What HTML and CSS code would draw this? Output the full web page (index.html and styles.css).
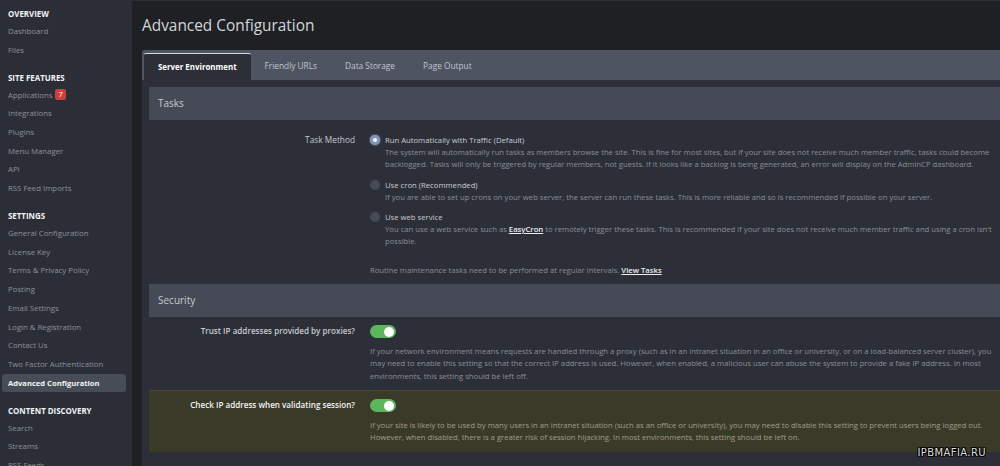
FILE: index.html
```html
<!DOCTYPE html>
<html>
<head>
<meta charset="utf-8">
<link rel="stylesheet" href="styles.css">
</head>
<body>
<div class="layout">
  <nav class="sidebar">
    <div class="group">
      <div class="group-title">Overview</div>
      <div class="item">Dashboard</div>
      <div class="item">Files</div>
    </div>
    <div class="group">
      <div class="group-title">Site Features</div>
      <div class="item">Applications <span class="badge">7</span></div>
      <div class="item">Integrations</div>
      <div class="item">Plugins</div>
      <div class="item">Menu Manager</div>
      <div class="item">API</div>
      <div class="item">RSS Feed Imports</div>
    </div>
    <div class="group">
      <div class="group-title">Settings</div>
      <div class="item">General Configuration</div>
      <div class="item">License Key</div>
      <div class="item">Terms &amp; Privacy Policy</div>
      <div class="item">Posting</div>
      <div class="item">Email Settings</div>
      <div class="item">Login &amp; Registration</div>
      <div class="item">Contact Us</div>
      <div class="item">Two Factor Authentication</div>
      <div class="item active">Advanced Configuration</div>
    </div>
    <div class="group">
      <div class="group-title">Content Discovery</div>
      <div class="item">Search</div>
      <div class="item">Streams</div>
      <div class="item">RSS Feeds</div>
    </div>
  </nav>
  <main class="main">
    <h1 class="page-title">Advanced Configuration</h1>
    <div class="tabs-box">
      <div class="tabs">
        <div class="tab active">Server Environment</div>
        <div class="tab">Friendly URLs</div>
        <div class="tab">Data Storage</div>
        <div class="tab">Page Output</div>
      </div>
      <div class="panel">
        <div class="section-head">Tasks</div>
        <div class="row">
          <div class="label">Task Method</div>
          <div class="field">
            <div class="option">
              <span class="radio checked"></span>
              <div class="opt-body">
                <div class="opt-title">Run Automatically with Traffic (Default)</div>
                <div class="desc">The system will automatically run tasks as members browse the site. This is fine for most sites, but if your site does not receive much member traffic, tasks could become backlogged. Tasks will only be triggered by regular members, not guests. If it looks like a backlog is being generated, an error will display on the AdminCP dashboard.</div>
              </div>
            </div>
            <div class="option">
              <span class="radio"></span>
              <div class="opt-body">
                <div class="opt-title">Use cron (Recommended)</div>
                <div class="desc">If you are able to set up crons on your web server, the server can run these tasks. This is more reliable and so is recommended if possible on your server.</div>
              </div>
            </div>
            <div class="option">
              <span class="radio"></span>
              <div class="opt-body">
                <div class="opt-title">Use web service</div>
                <div class="desc">You can use a web service such as <a class="link">EasyCron</a> to remotely trigger these tasks. This is recommended if your site does not receive much member traffic and using a cron isn't possible.</div>
              </div>
            </div>
            <div class="desc note">Routine maintenance tasks need to be performed at regular intervals. <a class="link">View Tasks</a></div>
          </div>
        </div>
        <div class="section-head">Security</div>
        <div class="row row-sec">
          <div class="label strong">Trust IP addresses provided by proxies?</div>
          <div class="field">
            <span class="toggle"></span>
            <div class="desc">If your network environment means requests are handled through a proxy (such as in an intranet situation in an office or university, or on a load-balanced server cluster), you may need to enable this setting so that the correct IP address is used. However, when enabled, a malicious user can abuse the system to provide a fake IP address. In most environments, this setting should be left off.</div>
          </div>
        </div>
        <div class="row row-sec highlight">
          <div class="label strong white">Check IP address when validating session?</div>
          <div class="field">
            <span class="toggle"></span>
            <div class="desc">If your site is likely to be used by many users in an intranet situation (such as an office or university), you may need to disable this setting to prevent users being logged out. However, when disabled, there is a greater risk of session hijacking. In most environments, this setting should be left on.</div>
          </div>
        </div>
      </div>
    </div>
  </main>
</div>
<div class="watermark">IPBMAFIA.RU</div>
</body>
</html>
```

FILE: styles.css
```css
* { box-sizing: border-box; }
html, body { margin: 0; padding: 0; }
body {
  background: #1f2024;
  font-family: "Open Sans", "Liberation Sans", sans-serif;
  width: 1000px;
  height: 466px;
  overflow: hidden;
  position: relative;
}
.layout {
  display: flex;
  height: 466px;
  border-top: 1px solid #2c2e34;
}
.sidebar {
  width: 132px;
  flex: none;
  background: #2b2e37;
  padding-top: 5px;
}
.group { margin-bottom: 10.3px; }
.group-title {
  color: #f2f3f5;
  font-size: 7.9px;
  font-weight: 700;
  text-transform: uppercase;
  line-height: 16px;
  padding-left: 8px;
}
.item {
  color: #8d919a;
  font-size: 7.8px;
  line-height: 18.7px;
  height: 18.7px;
  padding-left: 6px;
  margin: 0 6px 0 2px;
  white-space: nowrap;
}
.item.active {
  background: #484c57;
  color: #f4f5f7;
  font-weight: 700;
  font-size: 7.6px;
  border-radius: 3px;
}
.badge {
  display: inline-block;
  background: #c8413a;
  color: #fff;
  font-size: 7.5px;
  line-height: 11px;
  height: 11px;
  padding: 0 3px;
  border-radius: 2px;
  vertical-align: 1px;
  margin-left: 1px;
}
.main {
  flex: 1;
  padding-left: 10px;
  min-width: 0;
}
.page-title {
  margin: 0;
  height: 49px;
  padding-top: 13px;
  font-size: 15.4px;
  font-weight: 400;
  color: #d3d6db;
  line-height: 24px;
}
.tabs-box {
  background: #2c2f38;
  border-radius: 3px 0 0 0;
  overflow: hidden;
}
.tabs {
  display: flex;
  background: #4e5462;
  height: 30px;
  padding: 3px 0 0 2px;
}
.tab {
  padding: 0 14px;
  font-size: 8.3px;
  color: #c3c7ce;
  line-height: 26px;
}
.tab.active {
  background: #2c2f38;
  color: #fff;
  font-weight: 700;
  font-size: 7.9px;
  border-top: 1px solid #d9dbe0;
  border-radius: 2px 2px 0 0;
}
.panel {
  padding: 7px 0 0 7px;
  height: 400px;
}
.section-head {
  background: #454a56;
  color: #c6c9cf;
  font-size: 10px;
  height: 33px;
  line-height: 33px;
  padding-left: 9px;
}
.row {
  display: flex;
  padding: 14px 3px 0 0;
  height: 164px;
}
.label {
  width: 206px;
  flex: none;
  text-align: right;
  font-size: 8.3px;
  color: #c6c9cf;
  line-height: 12px;
}
.label.strong { font-weight: 600; font-size: 8.1px; }
.label.white { color: #f3f4f6; }
.field {
  flex: 1;
  padding-left: 15px;
}
.option {
  display: flex;
  margin-bottom: 8px;
}
.radio {
  flex: none;
  width: 10px;
  height: 10px;
  border-radius: 50%;
  background: #464a54;
  margin: 1px 5px 0 0;
}
.radio.checked {
  background: #f1f3f7;
  border: 3px solid #8196b6;
  box-shadow: 0 0 2px #a9bde0;
}
.opt-title {
  font-size: 7.7px;
  color: #c9ccd2;
  line-height: 12px;
}
.desc {
  font-size: 7.7px;
  color: #8a8e97;
  line-height: 12.3px;
}
.note {
  margin-top: 17px;
}
.link {
  color: #eceef1;
  font-weight: 600;
  text-decoration: underline;
}
.row-sec {
  height: 73px;
  padding-top: 8px;
  padding-right: 7px;
}
.toggle {
  display: block;
  width: 26px;
  height: 13px;
  border-radius: 7px;
  background: #5cb65d;
  position: relative;
  margin-bottom: 7px;
}
.toggle::after {
  content: "";
  position: absolute;
  right: 2px;
  top: 1.5px;
  width: 10px;
  height: 10px;
  border-radius: 50%;
  background: #fff;
}
.highlight {
  background: #3a3a29;
  border-top: 1px solid #46462f;
  height: 62px;
  padding-top: 8px;
}
.highlight .desc { color: #a09f88; }
.watermark {
  position: absolute;
  right: 14px;
  bottom: 8px;
  font-family: "DejaVu Sans", sans-serif;
  font-size: 10px;
  letter-spacing: 0.4px;
  color: #dcdcdc;
  text-shadow: 1px 1px 0 #000, -1px -1px 0 #000, 1px -1px 0 #000, -1px 1px 0 #000;
}
```
